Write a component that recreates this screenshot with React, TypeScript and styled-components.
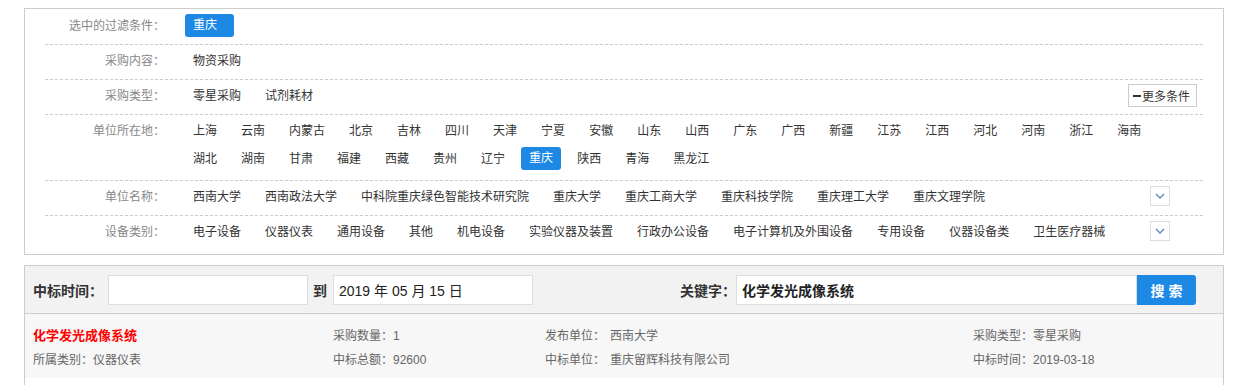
import React from 'react';
import styled, { createGlobalStyle } from 'styled-components';

const GlobalStyle = createGlobalStyle`
  body {
    margin: 0;
    background: #fff;
    font-family: "Liberation Sans", "Noto Sans CJK SC", sans-serif;
    font-size: 12px;
    color: #333;
  }
`;

const Page = styled.div`
  width: 1200px;
  padding: 8px 0 0 24px;
`;

const FilterPanel = styled.section`
  border: 1px solid #ccc;
  padding: 1px 20px 4px;
`;

const FilterRow = styled.div<{ $last?: boolean; $tall?: boolean }>`
  display: flex;
  align-items: flex-start;
  padding: 4px 0 ${({ $tall }) => ($tall ? '10px' : '7px')};
  border-bottom: ${({ $last }) => ($last ? 'none' : '1px dashed #ccc')};
`;

const RowLabel = styled.div`
  flex: 0 0 120px;
  height: 23px;
  margin-right: 20px;
  text-align: right;
  line-height: 25px;
  color: #888;
`;

const ValueList = styled.div<{ $pad?: number }>`
  flex: 1;
  min-width: 0;
  display: flex;
  flex-wrap: wrap;
  row-gap: 5px;
  padding-right: ${({ $pad }) => $pad ?? 0}px;
`;

const ValueItem = styled.span<{ $active?: boolean }>`
  height: 23px;
  line-height: ${({ $active }) => ($active ? '23px' : '25px')};
  padding: 0 8px;
  margin-right: 8px;
  border-radius: 3px;
  white-space: nowrap;
  color: ${({ $active }) => ($active ? '#fff' : '#333')};
  background: ${({ $active }) => ($active ? '#1d89e4' : 'transparent')};
`;

const SelectedTag = styled.span`
  height: 23px;
  line-height: 23px;
  padding: 0 17px 0 8px;
  border-radius: 3px;
  color: #fff;
  background: #1d89e4;
`;

const MoreButton = styled.button`
  display: flex;
  align-items: center;
  height: 23px;
  margin-right: 6px;
  padding: 0 6px 0 4px;
  border: 1px solid #ccc;
  background: #fff;
  font: inherit;
  color: #333;
  cursor: pointer;

  i {
    display: block;
    width: 8px;
    height: 2px;
    margin-right: 1px;
    background: #333;
  }
`;

const ExpandBox = styled.span`
  display: flex;
  align-items: center;
  justify-content: center;
  flex: 0 0 20px;
  height: 20px;
  margin: 1px 33px 0 0;
  box-sizing: border-box;
  border: 1px solid #ddd;
  background: #fff;
`;

const SearchPanel = styled.section`
  margin-top: 10px;
  border: 1px solid #ccc;
  padding-bottom: 20px;
`;

const SearchBar = styled.div`
  display: flex;
  align-items: center;
  height: 47px;
  padding: 0 27px 0 8px;
  background: #f2f2f2;
  border-bottom: 1px solid #ccc;
`;

const BarLabel = styled.span<{ $gap?: number }>`
  font-size: 14px;
  font-weight: bold;
  color: #333;
  margin: 0 ${({ $gap }) => $gap ?? 0}px;
  white-space: nowrap;
`;

const TextInput = styled.input<{ $width: number; $bold?: boolean }>`
  box-sizing: border-box;
  width: ${({ $width }) => $width}px;
  height: 30px;
  padding: 0 5px;
  border: 1px solid #ddd;
  background: #fff;
  outline: none;
  font-family: "Liberation Sans", "Noto Sans CJK SC", sans-serif;
  font-size: 14px;
  font-weight: ${({ $bold }) => ($bold ? 'bold' : 'normal')};
  color: #222;
`;

const KeywordGroup = styled.div`
  display: flex;
  align-items: center;
  margin-left: auto;
`;

const SearchButton = styled.button`
  width: 59px;
  height: 30px;
  border: none;
  border-radius: 0 3px 3px 0;
  background: #1d89e4;
  color: #fff;
  font-family: "Liberation Sans", "Noto Sans CJK SC", sans-serif;
  font-size: 14px;
  font-weight: bold;
  cursor: pointer;
`;

const ResultGrid = styled.div`
  display: grid;
  grid-template-columns: 300px 212px 428px 1fr;
  padding: 10px 8px 6px;
  background: #f7f7f7;
  line-height: 24px;
  color: #666;
`;

const ResultTitle = styled.a`
  font-size: 13px;
  font-weight: bold;
  color: #f00;
  text-decoration: none;
`;

const ResultValue = styled.span<{ $gap?: number }>`
  margin-left: ${({ $gap }) => $gap ?? 0}px;
`;

const Chevron = () => (
  <svg width="10" height="6" viewBox="0 0 10 6">
    <polyline points="1,1 5,5 9,1" fill="none" stroke="#5b86b8" strokeWidth="1.3" />
  </svg>
);

const locations = [
  '上海', '云南', '内蒙古', '北京', '吉林', '四川', '天津', '宁夏', '安徽', '山东',
  '山西', '广东', '广西', '新疆', '江苏', '江西', '河北', '河南', '浙江', '海南',
  '湖北', '湖南', '甘肃', '福建', '西藏', '贵州', '辽宁', '重庆', '陕西', '青海', '黑龙江'
];

const units = [
  '西南大学', '西南政法大学', '中科院重庆绿色智能技术研究院', '重庆大学',
  '重庆工商大学', '重庆科技学院', '重庆理工大学', '重庆文理学院'
];

const categories = [
  '电子设备', '仪器仪表', '通用设备', '其他', '机电设备', '实验仪器及装置',
  '行政办公设备', '电子计算机及外围设备', '专用设备', '仪器设备类', '卫生医疗器械'
];

const App: React.FC = () => (
  <>
    <GlobalStyle />
    <Page>
      <FilterPanel>
        <FilterRow>
          <RowLabel>选中的过滤条件：</RowLabel>
          <ValueList>
            <SelectedTag>重庆</SelectedTag>
          </ValueList>
        </FilterRow>

        <FilterRow>
          <RowLabel>采购内容：</RowLabel>
          <ValueList>
            <ValueItem>物资采购</ValueItem>
          </ValueList>
        </FilterRow>

        <FilterRow>
          <RowLabel>采购类型：</RowLabel>
          <ValueList>
            <ValueItem>零星采购</ValueItem>
            <ValueItem>试剂耗材</ValueItem>
          </ValueList>
          <MoreButton>
            <i />
            更多条件
          </MoreButton>
        </FilterRow>

        <FilterRow $tall>
          <RowLabel>单位所在地：</RowLabel>
          <ValueList $pad={20}>
            {locations.map((name) => (
              <ValueItem key={name} $active={name === '重庆'}>
                {name}
              </ValueItem>
            ))}
          </ValueList>
        </FilterRow>

        <FilterRow>
          <RowLabel>单位名称：</RowLabel>
          <ValueList>
            {units.map((name) => (
              <ValueItem key={name}>{name}</ValueItem>
            ))}
          </ValueList>
          <ExpandBox>
            <Chevron />
          </ExpandBox>
        </FilterRow>

        <FilterRow $last>
          <RowLabel>设备类别：</RowLabel>
          <ValueList>
            {categories.map((name) => (
              <ValueItem key={name}>{name}</ValueItem>
            ))}
          </ValueList>
          <ExpandBox>
            <Chevron />
          </ExpandBox>
        </FilterRow>
      </FilterPanel>

      <SearchPanel>
        <SearchBar>
          <BarLabel>中标时间：</BarLabel>
          <TextInput $width={200} style={{ marginLeft: 5 }} defaultValue="" />
          <BarLabel $gap={5}>到</BarLabel>
          <TextInput $width={200} style={{ marginLeft: 1 }} defaultValue="2019 年 05 月 15 日" />
          <KeywordGroup>
            <BarLabel>关键字：</BarLabel>
            <TextInput $width={401} $bold defaultValue="化学发光成像系统" />
            <SearchButton>搜 索</SearchButton>
          </KeywordGroup>
        </SearchBar>

        <ResultGrid>
          <div>
            <ResultTitle href="#">化学发光成像系统</ResultTitle>
          </div>
          <div>采购数量：1</div>
          <div>
            发布单位：<ResultValue $gap={5}>西南大学</ResultValue>
          </div>
          <div>采购类型：零星采购</div>
          <div>所属类别：仪器仪表</div>
          <div>中标总额：92600</div>
          <div>
            中标单位：<ResultValue $gap={5}>重庆留辉科技有限公司</ResultValue>
          </div>
          <div>中标时间：2019-03-18</div>
        </ResultGrid>
      </SearchPanel>
    </Page>
  </>
);

export default App;
